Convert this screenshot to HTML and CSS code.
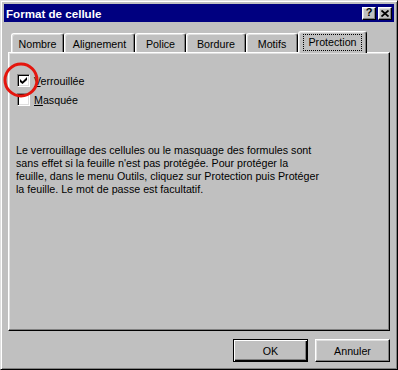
FILE: index.html
```html
<!DOCTYPE html>
<html lang="fr">
<head>
<meta charset="utf-8">
<title>Format de cellule</title>
<link rel="stylesheet" href="styles.css">
</head>
<body>
<div class="window">
  <div class="titlebar">
    <span class="title">Format de cellule</span>
    <div class="tb-buttons">
      <span class="tb-btn help">?</span>
      <span class="tb-btn close">
        <svg width="8" height="7" viewBox="0 0 8 7"><path d="M0.5 0.5 L7.5 6.5 M7.5 0.5 L0.5 6.5" stroke="#000" stroke-width="1.8" fill="none"/></svg>
      </span>
    </div>
  </div>
  <div class="content">
    <div class="tabs">
      <div class="tab t-nombre">Nombre</div>
      <div class="tab t-align">Alignement</div>
      <div class="tab t-police">Police</div>
      <div class="tab t-bordure">Bordure</div>
      <div class="tab t-motifs">Motifs</div>
      <div class="tab t-protection active"><span class="focus">Protection</span></div>
    </div>
    <div class="panel">
      <div class="check-row">
        <span class="checkbox">
          <svg width="11" height="11" viewBox="0 0 11 11"><polygon points="2,4 4.5,6.5 9,2 9,5 4.5,9 2,7" fill="#000"/></svg>
        </span>
        <span class="label"><u>V</u>errouillée</span>
        <svg class="circle" width="40" height="40" viewBox="0 0 40 40"><circle cx="20" cy="20" r="16" stroke="#e4160e" stroke-width="3" fill="none"/></svg>
      </div>
      <div class="check-row">
        <span class="checkbox"></span>
        <span class="label"><u>M</u>asquée</span>
      </div>
      <p class="info">Le verrouillage des cellules ou le masquage des formules sont<br>sans effet si la feuille n'est pas protégée. Pour protéger la<br>feuille, dans le menu Outils, cliquez sur Protection puis Protéger<br>la feuille. Le mot de passe est facultatif.</p>
    </div>
    <div class="footer">
      <button class="btn default">OK</button>
      <button class="btn">Annuler</button>
    </div>
  </div>
</div>
</body>
</html>
```

FILE: styles.css
```css
html, body {
  margin: 0;
  padding: 0;
  background: #c0c0c0;
}

body {
  font-family: "Liberation Sans", Arial, sans-serif;
  font-size: 10.7px;
  color: #000;
}

.window {
  width: 398px;
  height: 370px;
  box-sizing: border-box;
  background: #c0c0c0;
  border: 1px solid;
  border-color: #dfdfdf #000 #000 #dfdfdf;
  box-shadow: inset 1px 1px #fff, inset -1px -1px #808080;
  padding: 3px;
  display: flex;
  flex-direction: column;
}

.titlebar {
  height: 18px;
  background: #000080;
  display: flex;
  align-items: center;
  justify-content: space-between;
  padding: 0 2px 0 2px;
}

.title {
  color: #fff;
  font-weight: bold;
  font-size: 11.6px;
}

.tb-buttons {
  display: flex;
  gap: 2px;
}

.tb-btn {
  width: 14px;
  height: 13px;
  box-sizing: border-box;
  background: #c0c0c0;
  border: 1px solid;
  border-color: #fff #000 #000 #fff;
  box-shadow: inset -1px -1px #808080, inset 1px 1px #dfdfdf;
  display: flex;
  align-items: center;
  justify-content: center;
}

.tb-btn.help {
  font-weight: bold;
  font-size: 11px;
  line-height: 1;
  padding-bottom: 1px;
}

.tb-btn svg {
  display: block;
}

.content {
  flex: 1;
  display: flex;
  flex-direction: column;
  padding: 0 4px;
}

.tabs {
  display: flex;
  align-items: flex-end;
  margin-top: 9px;
  margin-left: 3px;
  height: 21px;
}

.tab {
  height: 19px;
  box-sizing: border-box;
  background: #c0c0c0;
  border: 1px solid;
  border-color: #fff #000 transparent #fff;
  border-bottom: none;
  border-radius: 3px 3px 0 0;
  box-shadow: inset -1px 0 #808080, inset 1px 1px #dfdfdf;
  display: flex;
  align-items: center;
  justify-content: center;
  padding-top: 2px;
  white-space: nowrap;
}

.t-nombre { width: 53px; }
.t-align { width: 71px; }
.t-police { width: 51px; }
.t-bordure { width: 60px; }
.t-motifs { width: 52px; }
.t-protection { width: 69px; }

.tab.active {
  height: 22px;
  margin-bottom: -1px;
  position: relative;
  z-index: 1;
  padding-top: 0;
}

.focus {
  outline: 1px dotted #000;
  padding: 1px 4px 2px;
}

.panel {
  height: 279px;
  box-sizing: border-box;
  border: 1px solid;
  border-color: #fff #000 #000 #fff;
  box-shadow: inset -1px -1px #808080, inset 1px 1px #dfdfdf;
  padding: 21px 7px 0;
  display: flex;
  flex-direction: column;
  gap: 6px;
}

.check-row {
  position: relative;
  display: flex;
  align-items: center;
  gap: 4px;
  height: 13px;
  margin-left: 1px;
}

.checkbox {
  width: 13px;
  height: 13px;
  box-sizing: border-box;
  background: #fff;
  border: 1px solid;
  border-color: #808080 #fff #fff #808080;
  box-shadow: inset 1px 1px #000, inset -1px -1px #dfdfdf;
  flex: none;
}

.checkbox svg {
  display: block;
}

.label {
  line-height: 13px;
  padding-top: 1px;
}

.circle {
  position: absolute;
  left: -16px;
  top: -14px;
  z-index: 2;
}

.info {
  margin: 32px 0 0 0;
  line-height: 13px;
  white-space: nowrap;
}

.footer {
  display: flex;
  justify-content: flex-end;
  gap: 7px;
  margin-top: 8px;
}

.btn {
  width: 75px;
  height: 23px;
  box-sizing: border-box;
  background: #c0c0c0;
  border: 1px solid;
  border-color: #fff #000 #000 #fff;
  box-shadow: inset -1px -1px #808080, inset 1px 1px #dfdfdf;
  font-family: "Liberation Sans", Arial, sans-serif;
  font-size: 10.7px;
  color: #000;
  padding: 0;
}

.btn.default {
  border-color: #000;
  box-shadow: inset 1px 1px #fff, inset -1px -1px #000, inset -2px -2px #808080;
}
```
